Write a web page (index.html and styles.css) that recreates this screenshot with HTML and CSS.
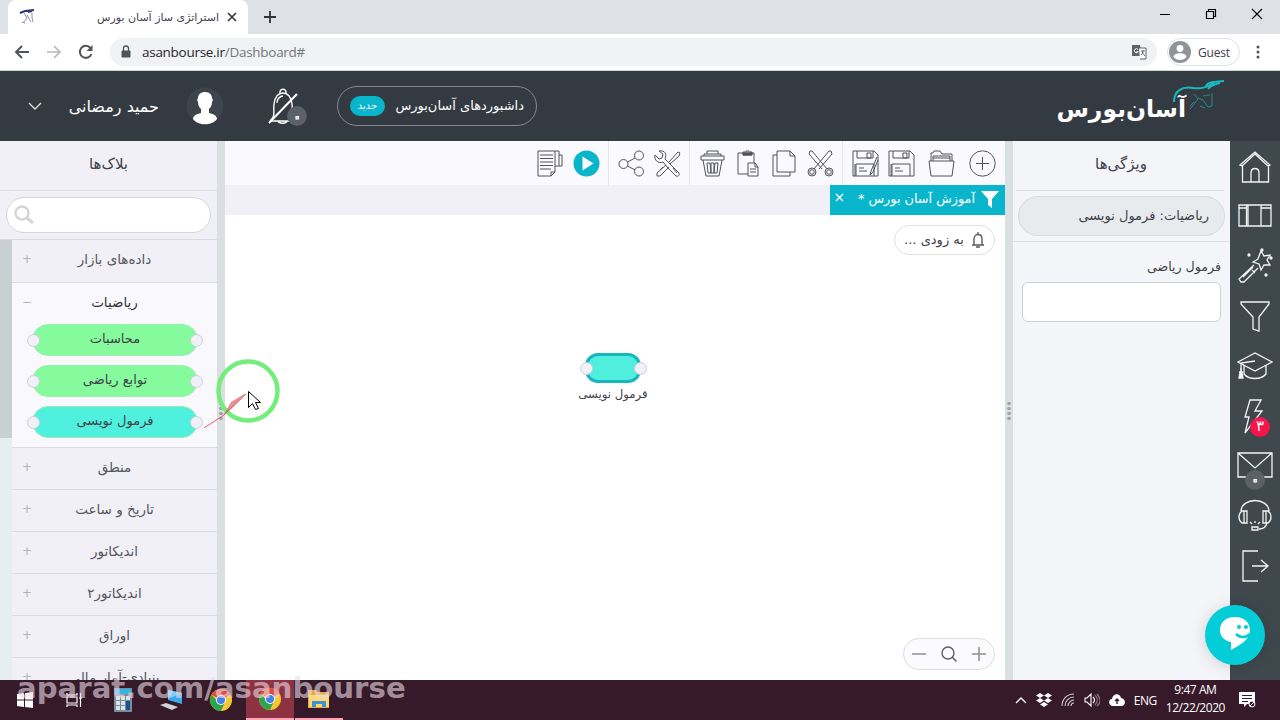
FILE: index.html
```html
<!doctype html>
<html lang="fa">

<head>
  <meta charset="UTF-8">
  <title>استراتژی ساز آسان بورس</title>
  <link rel="stylesheet" href="styles.css">
</head>

<body>

  <div class="tabs">
    <div class="tab">
      <svg class="favicon" width="16" height="16" viewBox="0 0 16 16" fill="none" stroke="#36366f"><path d="M1 4l5-2 9-1M9 3l4-1" stroke-width="2"/><path d="M5 4l3 5-4 5M8 6l4 7M13 4v4l1 5M3 13l3 1" stroke="#8c93ad"/></svg>
      <span class="tab-title" dir="rtl">استراتژی ساز آسان بورس</span>
      <svg width="10" height="10" viewBox="0 0 10 10" stroke="#333" stroke-width="1.600"><path d="M1 1l8 8M9 1l-8 8"/></svg>
    </div>
    <svg class="new-tab" width="14" height="14" viewBox="0 0 14 14" stroke="#333" stroke-width="1.800"><path d="M7 1v12M1 7h12"/></svg>
    <div class="win-buttons">
      <svg width="12" height="12" viewBox="0 0 12 12" stroke="#000" fill="none"><path d="M1 6.500h10"/></svg>
      <svg width="12" height="12" viewBox="0 0 12 12" stroke="#000" fill="none"><path d="M1.500 3.500h7v7h-7zM3.500 3.500v-2h7v7h-2" stroke-width="1.200"/></svg>
      <svg width="12" height="12" viewBox="0 0 12 12" stroke="#000" fill="none"><path d="M1 1l10 10M11 1L1 11" stroke-width="1.100"/></svg>
    </div>
  </div>

  <div class="address">
    <svg width="16" height="16" viewBox="0 0 16 16" fill="none" stroke="#505357" stroke-width="1.900"><path d="M15 8H2M8 2L2 8l6 6"/></svg>
    <svg width="16" height="16" viewBox="0 0 16 16" fill="none" stroke="#b5b7ba" stroke-width="1.700"><path d="M1 8h13M8 2l6 6-6 6"/></svg>
    <svg width="16" height="16" viewBox="0 0 16 16" fill="none" stroke="#505357" stroke-width="2"><path d="M13.500 10A6 6 0 1 1 12.500 4"/><path d="M14.500 1v6h-6z" fill="#505357" stroke="none"/></svg>
    <div class="url-box">
      <svg width="10" height="14" viewBox="0 0 10 14"><path d="M1 6h8v6H1z" fill="#505357" stroke="#505357" stroke-linejoin="round"/><path d="M2.500 6V3.500a2.500 2.500 0 0 1 5 0V6" fill="none" stroke="#505357" stroke-width="1.300"/></svg>
      <span class="url">asanbourse.ir<span>/Dashboard#</span></span>
      <svg width="16" height="16" viewBox="0 0 16 16"><path d="M1 1h8l2 11H1z" fill="#5f6368"/><path d="M8 4h7v11H9" fill="#fff" stroke="#5f6368"/><path d="M7 5.500a2 2 0 1 0 .300 2H5.500" fill="none" stroke="#fff"/><path d="M10 7h4M12 6v1c0 2-1 3-2 4M11 8l3 4" fill="none" stroke="#5f6368" stroke-width=".9"/></svg>
    </div>
    <div class="guest">
      <svg width="22" height="22" viewBox="0 0 22 22"><circle cx="11" cy="11" r="11" fill="#8f9499"/><circle cx="11" cy="7.500" r="3.400" fill="#fff"/><path d="M4.500 16c0-5 13-5 13 0-3 4-10 4-13 0z" fill="#fff"/></svg>
      <span>Guest</span>
    </div>
    <svg class="dots" width="4" height="14" viewBox="0 0 4 14" fill="#505357"><circle cx="2" cy="2" r="1.500"/><circle cx="2" cy="7" r="1.500"/><circle cx="2" cy="12" r="1.500"/></svg>
  </div>

  <div class="header">
    <svg class="chevron" width="14" height="8" viewBox="0 0 14 8" fill="none" stroke="#dfe3e6" stroke-width="1.300"><path d="M1 1l6 6 6-6"/></svg>
    <span class="user-name" dir="rtl">حمید رمضانی</span>
    <svg class="avatar" width="38" height="38" viewBox="0 0 38 38"><circle cx="19" cy="19" r="18.500" fill="#3d444b"/><path d="M12 11c0-8 14-8 14 0 1 1 1 3 0 4 0 4-2 6-3 7v4c5 1 8 3 8 6-5 7-19 7-24 0 0-3 3-5 8-6v-4c-1-1-3-3-3-7-1-1-1-3 0-4z" fill="#fff"/></svg>
    <div class="alarm">
      <svg width="30" height="37" viewBox="0 0 30 37" fill="none" stroke="#fff" stroke-width="1.400"><path d="M2 33c6-5 3-9 4-17C7 9 10 5 15 5s8 4 9 11c1 8-2 12 4 17M2 33h26M12 5c-1-5 7-5 6 0M10 33c1 3 8 3 9 0M9 15c0-4 3-7 6-7"/><path d="M1 35L29 6" stroke-width="2"/></svg>
      <span class="count">۰</span>
    </div>
    <div class="dash-link" dir="rtl"><span>داشبوردهای آسان‌بورس</span><b>جدید</b></div>
    <div class="logo">
      <span dir="rtl">آسان‌بورس</span>
      <svg width="60" height="36" viewBox="0 0 60 36" fill="none" stroke="#19b9bd"><path d="M4 24C4 13 12 8 23 10c9 1 14-1 21-5M36 10c-1-6 7-6 18-7M38 11c3-4 7-5 12-6" stroke-width="2"/><path d="M20 31l8-10-4-5M28 20l5 2 5 7M20 28l4-4M42 15v13l-4 1M40 17l-7 1M30 28l5 2" stroke-width="1" opacity=".65"/></svg>
    </div>
  </div>

  <div class="main">
    <div class="blocks">
      <h3 dir="rtl">بلاک‌ها</h3>
      <div class="search">
        <div class="search-box"><svg width="20" height="20" viewBox="0 0 20 20" fill="none" stroke="#d4d5d7" stroke-width="2.400"><circle cx="8" cy="8" r="6.500"/><path d="M13 13l6 5" stroke-width="3"/></svg></div>
      </div>
      <div class="list">
        <div class="scroll"><div class="thumb"></div></div>
        <div class="groups">
          <div class="group first"><i>+</i><span dir="rtl">داده‌های بازار</span></div>
          <div class="group open"><i>−</i><span dir="rtl">ریاضیات</span></div>
          <div class="block-items">
            <div class="block"><span dir="rtl">محاسبات</span></div>
            <div class="block"><span dir="rtl">توابع ریاضی</span></div>
            <div class="block cyan"><span dir="rtl">فرمول نویسی</span></div>
          </div>
          <div class="group"><i>+</i><span dir="rtl">منطق</span></div>
          <div class="group"><i>+</i><span dir="rtl">تاریخ و ساعت</span></div>
          <div class="group"><i>+</i><span dir="rtl">اندیکاتور</span></div>
          <div class="group"><i>+</i><span dir="rtl">اندیکاتور۲</span></div>
          <div class="group"><i>+</i><span dir="rtl">اوراق</span></div>
          <div class="group"><i>+</i><span dir="rtl">بنیادی-آمار مالی</span></div>
        </div>
      </div>
    </div>
    <div class="splitter"><u></u></div>

    <div class="workspace">
      <div class="toolbar">
        <div class="tools">
          <svg viewBox="0 0 27 27"><path d="M1 1h17v21l-4 4H1zM14 26v-4h4M3 5h13M3 8.500h13M3 12h13M3 15.500h13M3 19h11M18 1h4v15h-4M22 5h3v11h-3"/></svg>
          <svg viewBox="0 0 27 27"><circle cx="13.500" cy="13.500" r="13" fill="#08b5cb" stroke="none"/><path d="M9.500 6.500v14l11-7z" fill="#fff" stroke="none"/></svg>
        </div>
        <div class="tools">
          <svg viewBox="0 0 27 27"><circle cx="5.500" cy="14" r="4.500"/><circle cx="21" cy="5.500" r="4.500"/><circle cx="21" cy="21.500" r="4.500"/><path d="M9.500 12l7.500-4M9.500 16l7.500 4"/></svg>
          <svg viewBox="0 0 27 27"><path d="M5 1C11 0 13 4 11 9l6 6 8 8c1 2-1 4-3 3l-8-8-5-6C4 14 0 10 1 5l4 4 3-1 1-4zM15 12l9-10 2 1-1 3-9 8M12 15l-9 8 0 3 3 0 9-9M6 20l3-3M19 18l4 5"/></svg>
        </div>
        <div class="tools">
          <svg viewBox="0 0 27 27"><path d="M2 6h23v4H2zM5 6V4h17v2M8 4V1h11v3M4 10l3 16h13l3-16M8 13h3l1 10H9zM12 13h3v10h-3zM16 13h3l-1 10h-3z"/></svg>
          <svg viewBox="0 0 27 27"><path d="M13 24H3V3h16v10M8 5V2h3V1h3v1h3v3zM13 13h7l3 4v9H13zM20 13v4h3M15 19h6M15 22h6"/><path d="M8 3h9v2H8z" fill="#52545a"/></svg>
          <svg viewBox="0 0 27 27"><path d="M6 1h13l5 5v16H6zM19 1v5h5M6 5H2v21h17v-4"/></svg>
          <svg viewBox="0 0 27 27"><path d="M3 1l2 0 15 18M3 1l-1 3 13 15M24 1l-2 0L7 19M24 1l1 3-13 15"/><circle cx="5" cy="22" r="4"/><circle cx="5" cy="22" r="2.300"/><circle cx="22" cy="22" r="4"/><circle cx="22" cy="22" r="2.300"/></svg>
        </div>
        <div class="tools last">
          <svg viewBox="0 0 27 27"><path d="M1 1h21l4 4v21H1zM5 1v7h16V1M15 3h4v5h-4zM4 26V14h18v12M7 18h5M7 21h8M3 14v12M25 7l-6 14-1 4 3-3 5-12"/></svg>
          <svg viewBox="0 0 27 27"><path d="M1 1h21l4 4v21H1zM5 1v7h16V1M15 3h4v5h-4zM4 26V14h18v12M7 18h5M7 21h8M3 14v12"/></svg>
          <svg class="folder" viewBox="0 0 27 27"><path d="M1 11h25l-2 15H3zM3 11V3h2l1-2h6l2 3h10v7M5 11V6h17v5M5 8h17"/></svg>
          <svg class="plus" viewBox="0 0 27 27"><circle cx="13.500" cy="13.500" r="12.700"/><path d="M13.500 7v13M7 13.500h13"/></svg>
        </div>
      </div>
      <div class="sheets">
        <div class="sheet">
          <svg width="9" height="9" viewBox="0 0 9 9" stroke="#fff" stroke-width="1.400"><path d="M1 1l7 7M8 1L1 8"/></svg>
          <span dir="rtl">آموزش آسان بورس *</span>
          <svg width="18" height="18" viewBox="0 0 18 18" fill="#fff"><path d="M0 0h18l-7 8v9l-4-3V8z"/></svg>
        </div>
      </div>
      <div class="canvas">
        <div class="soon"><span dir="rtl">به زودی ...</span><svg width="14" height="16" viewBox="0 0 14 16" fill="none" stroke="#555961" stroke-width="1.400"><path d="M1 13h12M3 13V7c0-6 8-6 8 0v6M7 0v2M5 15h4"/></svg></div>
        <div class="node"><div class="node-box"></div><span dir="rtl">فرمول نویسی</span></div>
        <div class="zoom">
          <svg width="14" height="14" viewBox="0 0 14 14" stroke="#8b8e94" stroke-width="1.500"><path d="M0 7h14"/></svg>
          <svg width="16" height="16" viewBox="0 0 16 16" fill="none" stroke="#5c5e66" stroke-width="1.400"><circle cx="7" cy="7" r="6"/><path d="M11 11l4.500 4.500"/></svg>
          <svg width="14" height="14" viewBox="0 0 14 14" stroke="#8b8e94" stroke-width="1.500"><path d="M0 7h14M7 0v14"/></svg>
        </div>
      </div>
    </div>
    <div class="splitter"><u></u></div>

    <div class="props">
      <h3 dir="rtl">ویژگی‌ها</h3>
      <div class="prop-head"><div dir="rtl">ریاضیات: فرمول نویسی</div></div>
      <label dir="rtl">فرمول ریاضی</label>
      <input type="text">
    </div>

    <div class="sidebar">
      <div><svg viewBox="0 0 36 36"><path d="M3 17L18 4l15 13-2 1L18 6 5 18zM5.500 17v17h26V17M14 34V25c0-6 8-6 8 0v9"/></svg></div>
      <div><svg viewBox="0 0 36 36"><path d="M2 7h32v21H2zM9.500 7v21M24 7v21M2 10h7.500M24 10h10M11 7v21"/></svg></div>
      <div><svg viewBox="0 0 36 36"><path d="M22 8l2-5 3 5 6-1-3 5 3 5-6 0-3 5-2-6-6-2 5-3zM17 17L2 31l2 3 3 0 14-14M15 22l3 3M6 29l10-10"/><g fill="#fff"><circle cx="12" cy="7" r="1"/><circle cx="25" cy="2" r="1"/><circle cx="34" cy="10" r="1"/><circle cx="29" cy="27" r="1"/></g></svg></div>
      <div><svg viewBox="0 0 36 36"><path d="M4 4h28v2L22 19v14l-6-2V19L4 6z"/></svg></div>
      <div><svg viewBox="0 0 36 36"><path d="M1 14L18 5l17 9-17 9zM7 17v9c5 6 17 6 22 0v-9M18 13L4 15v9"/><path d="M4 20v10M2 24h4M2 30l1-5h2l1 5z" fill="#fff"/></svg></div>
      <div><svg viewBox="0 0 36 36"><path d="M13 2h11l-6 11h7L8 35l4-16H8z"/></svg><b class="badge">۳</b></div>
      <div><svg viewBox="0 0 36 36"><path d="M1 5h34v24H1zM1 5l17 15L35 5"/></svg><b class="badge gray">۰</b></div>
      <div><svg viewBox="0 0 36 36"><path d="M4 13C5-1 31-1 32 13M7 13v12H5c-4-3-4-9 0-12zM7 13h3v12H7M29 13v12h2c4-3 4-9 0-12zM29 13h-3v12h3M30 25c-1 4-3 6-8 6M15 29h6v3h-6zM13 24l2 2M18 23v2M23 24l-2 2"/></svg></div>
      <div><svg viewBox="0 0 36 36"><path d="M21 3H6v30h15M15 18h16M24 12l7 6-7 6"/></svg></div>
    </div>
  </div>

  <div class="taskbar">
    <div class="task"><svg width="16" height="16" viewBox="0 0 16 16" fill="#fff"><path d="M0 2l7-1v6.500H0zM8 1l8-1v7.500H8zM0 8.500h7V15l-7-1zM8 8.500h8V16l-8-1z"/></svg></div>
    <div class="task"><svg width="16" height="16" viewBox="0 0 16 16" fill="none" stroke="#fff" stroke-width="1.200"><path d="M1 1v2h10V1M1 5h10v6H1zM1 15v-2h10v2M14.500 1v14M13 6h3"/></svg></div>
    <div class="task"><svg width="18" height="24" viewBox="0 0 18 24"><path d="M0 0h18v24H0z" fill="#7b8c98"/><path d="M1 1h16v5H1z" fill="#2fb6e4"/><path d="M2 8h4v4H2zM7 8h4v4H7zM12 8h4v4h-4zM2 13h4v4H2zM7 13h4v4H7zM2 18h4v4H2zM7 18h4v4H7z" fill="#dce3e8"/><path d="M12 13h4v9h-4z" fill="#17548d"/></svg></div>
    <div class="task"><svg width="24" height="20" viewBox="0 0 24 20"><path d="M8 0l14 3v11L8 10z" fill="#3ea8e8"/><path d="M8 0l14 3-14 6z" fill="#78ccf6"/><path d="M0 15l6-2 12 4-6 3z" fill="#cdd3d9"/></svg></div>
    <div class="task"><svg width="22" height="22" viewBox="0 0 22 22"><circle cx="11" cy="11" r="11" fill="#f5c92d"/><path d="M11 11L1.500 5.500A11 11 0 0 1 20.500 5.500z" fill="#e04b3d"/><path d="M1.500 5.500A11 11 0 0 0 11 22l4-9-8-1z" fill="#2ea453"/><circle cx="11" cy="11" r="5" fill="#fff"/><circle cx="11" cy="11" r="4" fill="#4183ee"/></svg></div>
    <div class="task active"><svg width="22" height="22" viewBox="0 0 22 22"><circle cx="11" cy="11" r="11" fill="#f5c92d"/><path d="M11 11L1.500 5.500A11 11 0 0 1 20.500 5.500z" fill="#e04b3d"/><path d="M1.500 5.500A11 11 0 0 0 11 22l4-9-8-1z" fill="#2ea453"/><circle cx="11" cy="11" r="5" fill="#fff"/><circle cx="11" cy="11" r="4" fill="#4183ee"/></svg></div>
    <div class="task running"><svg width="22" height="20" viewBox="0 0 22 20"><path d="M0 1h8l2 2h11v16H0z" fill="#e9a83b"/><path d="M1 6h20v12H1z" fill="#fbd976"/><path d="M4 18v-6h14v6h-4v-3H8v3z" fill="#3d93d4"/></svg></div>
    <div class="tray">
      <svg width="12" height="8" viewBox="0 0 12 8" fill="none" stroke="#fff" stroke-width="1.300"><path d="M1 7l5-5 5 5"/></svg>
      <svg width="16" height="14" viewBox="0 0 16 14" fill="#fff"><path d="M4 0l4 2.500L4 5 0 2.500zM12 0l4 2.500L12 5 8 2.500zM4 5l4 2.500L4 10 0 7.500zM12 5l4 2.500-4 2.500-4-2.500zM8 9l4 2.500L8 14l-4-2.500z"/></svg>
      <svg width="14" height="14" viewBox="0 0 14 14" fill="none" stroke="#d5cdd2" stroke-width="1.100"><path d="M1 13C1 6 6 1 13 1M4 13c0-5 4-9 9-9M7 13c0-3 3-6 6-6M10 13c0-2 1-3 3-3"/></svg>
      <svg width="16" height="14" viewBox="0 0 16 14" fill="none" stroke="#fff" stroke-width="1.100"><path d="M1 5h2l4-4v12L3 9H1zM9 4c2 2 2 4 0 6"/><path d="M11 2c3 3 3 7 0 10M13 1c4 4 4 9 0 12" stroke="#8d7884"/></svg>
      <svg width="16" height="12" viewBox="0 0 16 12"><path d="M4 12c-5 0-5-7-1-7C4-1 11-1 12 4c5 0 5 8 1 8z" fill="#fff"/><path d="M8 10V5M6 7l2-2 2 2" stroke="#38192a" stroke-width="1.400" fill="none"/></svg>
      <span class="lang">ENG</span>
      <span class="clock">9:47 AM<br>12/22/2020</span>
      <svg class="notes" width="17" height="17" viewBox="0 0 17 17"><path d="M0 0h16v12H8l-3 3v-3H0z" fill="#fff"/><path d="M3 3.500h10M3 6.500h10M3 9.500h6" stroke="#38192a"/><circle cx="13" cy="12" r="3" fill="#38192a" stroke="#fff"/><path d="M11 14l4-4" stroke="#fff"/></svg>
    </div>
  </div>

  <div class="watermark">aparat.com/asanbourse</div>
  <svg class="drag" width="100" height="80" viewBox="0 0 100 80" fill="none"><circle cx="48" cy="36" r="29.500" stroke="#75ed7c" stroke-width="4.500"/><path d="M4 73L24 60 46 39" stroke="#e5606c"/><path d="M23 61l8-14 15-9-13 14z" fill="#dc5359" opacity=".65"/><path d="M48.500 36.500v16l4-4 3 6 3-1-3-6h5z" fill="#fff" stroke="#000"/></svg>
  <div class="chat"><svg width="34" height="38" viewBox="0 0 34 38"><path d="M17 2C7 2 2 8 2 15c0 7 5 11 11 12v8c7-4 18-9 19-19 0-9-6-14-15-14z" fill="#fff"/><circle cx="21" cy="12" r="2" fill="#05cdd7"/><circle cx="28" cy="12" r="2" fill="#05cdd7"/><path d="M18 19c4 4 10 4 14 0" fill="none" stroke="#05cdd7" stroke-width="2.500"/></svg></div>

</body>

</html>
```

FILE: styles.css
```css
* {
  margin: 0;
  padding: 0;
  box-sizing: border-box;
}

body {
  width: 1280px;
  height: 720px;
  overflow: hidden;
  position: relative;
  display: flex;
  flex-direction: column;
  font-family: "DejaVu Sans", sans-serif;
  font-size: 13px;
  color: #3f4249;
}

svg {
  display: block;
  flex: none;
}

span {
  white-space: nowrap;
}

/* browser */
.tabs {
  height: 34px;
  background: #dee1e5;
  display: flex;
  align-items: center;
  padding-left: 8px;
}

.tab {
  width: 240px;
  height: 34px;
  background: #fff;
  border-radius: 8px 8px 0 0;
  display: flex;
  align-items: center;
  padding: 0 11px;
}

.tab-title {
  margin-left: auto;
  margin-right: 8px;
  font-size: 11px;
}

.new-tab {
  margin-left: 15px;
}

.win-buttons {
  margin-left: auto;
  margin-right: 17px;
  padding-bottom: 6px;
  display: flex;
  gap: 34px;
}

.address {
  height: 37px;
  background: #fff;
  border-bottom: 1px solid #cdd5d7;
  display: flex;
  align-items: center;
  padding: 0 20px 0 14px;
  gap: 16px;
  font-family: "Open Sans", sans-serif;
}

.url-box {
  flex: 1;
  height: 28px;
  border-radius: 14px;
  background: #f0f2f3;
  display: flex;
  align-items: center;
  padding: 0 10px 0 11px;
  gap: 11px;
}

.url {
  flex: 1;
  font-size: 13.5px;
  letter-spacing: -.28px;
  color: #26282b;
}

.url span {
  color: #74777b;
}

.guest {
  width: 73px;
  height: 28px;
  margin-left: -6px;
  border: 1px solid #dfe1e4;
  border-radius: 14px;
  display: flex;
  align-items: center;
  gap: 7px;
  padding-left: 1px;
  font-size: 12px;
  letter-spacing: -.2px;
}

/* header */
.header {
  height: 70px;
  background: #343a41;
  display: flex;
  align-items: center;
  padding: 0 50px 0 28px;
  color: #fff;
}

.user-name {
  width: 90px;
  margin-left: 27px;
  font-size: 16px;
}

.avatar {
  margin-left: 27px;
}

.alarm {
  position: relative;
  margin-left: 44px;
}

.count {
  position: absolute;
  left: 19px;
  top: 18px;
  width: 20px;
  height: 20px;
  line-height: 20px;
  border-radius: 50%;
  background: #5b6167;
  text-align: center;
}

/* the zero is drawn as a ring */
.count, .badge.gray {
  font-size: 20px;
  color: #5b6167;
  -webkit-text-stroke: 1.2px #fff;
}

.dash-link {
  width: 200px;
  height: 40px;
  margin-left: 39px;
  border: 1px solid #85898e;
  border-radius: 20px;
  display: flex;
  align-items: center;
  justify-content: space-between;
  padding: 0 12px 1px;
  font-size: 13px;
}

.dash-link b {
  width: 35px;
  height: 20px;
  line-height: 19px;
  border-radius: 10px;
  background: #08b5cb;
  text-align: center;
  font-size: 10px;
  font-weight: normal;
}

.logo {
  margin-left: auto;
  display: flex;
  align-items: center;
}

.logo span {
  font-size: 23.5px;
  font-weight: bold;
  margin-right: -16px;
  padding-top: 6px;
}

.logo svg {
  margin-bottom: 20px;
}

/* page */
.main {
  height: 539px;
  display: flex;
}

h3 {
  height: 50px;
  line-height: 46px;
  text-align: center;
  font-size: 15px;
  font-weight: normal;
  border-bottom: 1px solid #dcdfe4;
}

.blocks {
  width: 217px;
  background: #f1f0f7;
  display: flex;
  flex-direction: column;
}

.search {
  height: 49px;
  padding: 6px;
  border-bottom: 1px solid #d8dadd;
}

.search-box {
  height: 36px;
  background: #fff;
  border: 1px solid #d4d6da;
  border-radius: 18px;
  padding: 7px;
}

.list {
  height: 440px;
  overflow: hidden;
  display: flex;
}

.scroll {
  width: 12px;
  background: #e8edef;
}

.thumb {
  height: 198px;
  background: #c8d0d2;
}

.groups {
  flex: 1;
}

.group {
  height: 42px;
  border-bottom: 1px solid #dadce2;
  display: flex;
  align-items: center;
  padding: 0 20px 4px 10px;
  font-size: 13.5px;
  color: #55575f;
}

.group i {
  width: 10px;
  font-style: normal;
  font-size: 12px;
  color: #b4b5ba;
}

.group span {
  flex: 1;
  text-align: center;
}

.group.first {
  height: 43px;
}

.group.open {
  height: 41px;
  border: 0;
  background: #f9f9fd;
  color: #32343b;
}

.block-items {
  height: 124px;
  background: #f9f9fd;
  border-bottom: 1px solid #dadce2;
  padding: 0 19px 0 20px;
  display: flex;
  flex-direction: column;
  gap: 9px;
}

.block {
  position: relative;
  height: 32px;
  line-height: 28px;
  border: 1px solid #9cebb1;
  border-radius: 16px;
  background: #85fb9e;
  text-align: center;
}

.cyan {
  background: #50f0df;
}

.block::before, .block::after, .node-box::before, .node-box::after {
  content: "";
  position: absolute;
  left: -6px;
  top: 9px;
  width: 11px;
  height: 11px;
  border-radius: 50%;
  border: 1px solid #ced0da;
  background: #f0f0f7;
}

.block::after, .node-box::after {
  left: auto;
  right: -6px;
}

.splitter {
  width: 8px;
  background: #dadfe2;
  display: flex;
  align-items: center;
  justify-content: center;
}

.splitter u {
  width: 4px;
  height: 20px;
  background: radial-gradient(circle, #a0a4a8 1.5px, transparent 2px) 0 0 / 4px 5px;
}

.workspace {
  width: 780px;
  display: flex;
  flex-direction: column;
}

.toolbar {
  height: 44px;
  background: #f9f9fe;
  display: flex;
  justify-content: flex-end;
  padding-right: 1px;
}

.tools {
  display: flex;
  align-items: center;
  gap: 9px;
  padding: 0 8px 0 9px;
  border-left: 1px solid #e4e5ea;
}

.tools:first-child {
  border: 0;
}

.tools svg {
  width: 27px;
  height: 27px;
  fill: none;
  stroke: #52545a;
  stroke-width: 1;
}

.tools .folder {
  margin-left: 4px;
}

.tools .plus {
  margin-left: 5px;
}

.sheets {
  height: 30px;
  background: #f1f0f7;
  display: flex;
  justify-content: flex-end;
}

.sheet {
  width: 175px;
  height: 30px;
  background: #08b5cb;
  color: #fff;
  display: flex;
  align-items: center;
  padding: 0 6px 0 5px;
}

.sheet svg:first-child {
  margin-bottom: 5px;
}

.sheet span {
  margin-left: auto;
  margin-right: 6px;
  padding-bottom: 3px;
  font-size: 12.8px;
}

.canvas {
  position: relative;
  flex: 1;
  background: #fff;
}

.soon {
  position: absolute;
  right: 10px;
  top: 10px;
  width: 101px;
  height: 30px;
  border: 1px solid #e1e1e6;
  border-radius: 15px;
  display: flex;
  align-items: center;
  justify-content: center;
  gap: 7px;
  padding-bottom: 1px;
}

.node {
  position: absolute;
  left: 348px;
  top: 138px;
  width: 80px;
  display: flex;
  flex-direction: column;
  align-items: center;
  font-size: 11.7px;
}

.node-box {
  position: relative;
  width: 56px;
  height: 30px;
  border: 3px solid #19b5bf;
  border-radius: 13px;
  background: #50eedd;
  margin-bottom: 4px;
}

.node-box::before {
  left: -8px;
  top: 6px;
}

.node-box::after {
  right: -9px;
  top: 6px;
}

.zoom {
  position: absolute;
  right: 10px;
  bottom: 10px;
  width: 92px;
  height: 32px;
  border: 1px solid #dcdde2;
  border-radius: 16px;
  background: #fbfbfe;
  display: flex;
  align-items: center;
  justify-content: space-between;
  padding: 0 8px 1px;
}

.props {
  width: 217px;
  background: #f4f5f9;
}

.props h3 {
  margin: 0 6px 0 3px;
  padding-left: 2px;
}

.prop-head {
  height: 51px;
  padding: 5px 5px 0;
  border-bottom: 1px solid #dcdfe4;
}

.prop-head div {
  height: 40px;
  line-height: 37px;
  border: 1px solid #d7dbde;
  border-radius: 20px;
  background: #e7ebee;
  padding: 0 15px;
}

.props label {
  display: block;
  height: 40px;
  line-height: 50px;
  padding-right: 9px;
  font-size: 12.6px;
}

.props input {
  display: block;
  width: 199px;
  height: 40px;
  margin-left: 9px;
  border: 1px solid #ced2d8;
  border-radius: 6px;
  background: #fff;
}

.sidebar {
  width: 50px;
  background: #3f484d;
}

.sidebar div {
  position: relative;
  height: 50px;
  padding: 7px;
}

.sidebar svg {
  width: 36px;
  height: 36px;
  fill: none;
  stroke: #f3f5f6;
  stroke-width: 1.3;
}

.badge {
  position: absolute;
  left: 20px;
  top: 26px;
  width: 20px;
  height: 20px;
  line-height: 19px;
  border-radius: 50%;
  background: #f3154b;
  color: #fff;
  text-align: center;
  font-size: 15px;
  font-weight: normal;
}

.badge.gray {
  left: 15px;
  top: 29px;
  background: #5b6167;
}

/* taskbar */
.taskbar {
  height: 40px;
  background: #361a29;
  display: flex;
  padding-left: 1px;
}

.task {
  width: 48px;
  margin-right: 1px;
  display: flex;
  align-items: center;
  justify-content: center;
}

.active {
  background: #8d3241;
  border-bottom: 2px solid #ffa5b5;
}

.running {
  border-bottom: 2px solid #ffa5b5;
}

.tray {
  margin-left: auto;
  padding-right: 24px;
  display: flex;
  align-items: center;
  color: #fff;
  gap: 9px;
  font-family: "Open Sans", sans-serif;
  font-size: 12px;
  letter-spacing: -.45px;
}

.clock {
  text-align: center;
  line-height: 18px;
  padding-bottom: 2px;
}

.notes {
  margin-left: 5px;
}

.watermark {
  position: absolute;
  left: 17px;
  top: 671px;
  font-size: 29.2px;
  line-height: 34px;
  font-weight: bold;
  color: rgba(235, 220, 230, .62);
}

.drag {
  position: absolute;
  left: 200px;
  top: 355px;
}

.chat {
  position: absolute;
  left: 1205px;
  top: 605px;
  width: 60px;
  height: 60px;
  padding: 10px 13px;
  border-radius: 50%;
  background: #05cdd7;
  box-shadow: 0 2px 16px rgba(0, 0, 0, .15);
}
```
